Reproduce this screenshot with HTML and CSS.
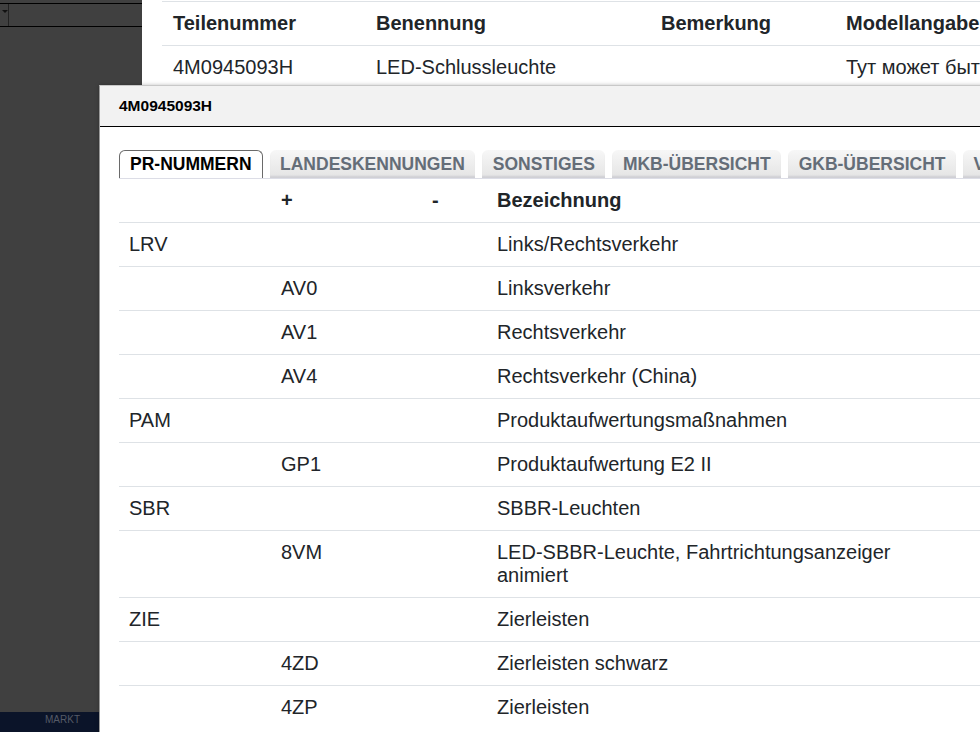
FILE: index.html
```html
<!DOCTYPE html>
<html lang="de">
<head>
    <meta charset="UTF-8">
    <meta name="viewport" content="width=device-width, initial-scale=1.0">
    <title>Teilekatalog</title>
    <link rel="stylesheet" href="styles.css">
</head>
<body>
    <div class="app">
        <aside class="sidebar">
            <div class="sidebar-bar">
                <span class="select-stub"><span class="caret"></span></span>
            </div>
            <div class="sidebar-foot">MARKT</div>
        </aside>

        <main class="content">
            <table class="parts">
                <thead>
                    <tr>
                        <th class="c-nr">Teilenummer</th>
                        <th class="c-name">Benennung</th>
                        <th class="c-note">Bemerkung</th>
                        <th class="c-model">Modellangabe</th>
                    </tr>
                </thead>
                <tbody>
                    <tr>
                        <td>4M0945093H</td>
                        <td>LED-Schlussleuchte</td>
                        <td></td>
                        <td>Тут может быть текст</td>
                    </tr>
                </tbody>
            </table>
        </main>
    </div>

    <div class="modal">
        <div class="modal-head">4M0945093H</div>
        <div class="modal-body">
            <ul class="tabs">
                <li class="tab active">PR-NUMMERN</li>
                <li class="tab">LANDESKENNUNGEN</li>
                <li class="tab">SONSTIGES</li>
                <li class="tab">MKB-ÜBERSICHT</li>
                <li class="tab">GKB-ÜBERSICHT</li>
                <li class="tab">VARIANTEN</li>
            </ul>

            <table class="pr-table">
                <thead>
                    <tr>
                        <th class="c-fam"></th>
                        <th class="c-plus">+</th>
                        <th class="c-minus">-</th>
                        <th class="c-desc">Bezeichnung</th>
                        <th class="c-rest"></th>
                    </tr>
                </thead>
                <tbody>
                    <tr><td>LRV</td><td></td><td></td><td>Links/Rechtsverkehr</td><td></td></tr>
                    <tr><td></td><td>AV0</td><td></td><td>Linksverkehr</td><td></td></tr>
                    <tr><td></td><td>AV1</td><td></td><td>Rechtsverkehr</td><td></td></tr>
                    <tr><td></td><td>AV4</td><td></td><td>Rechtsverkehr (China)</td><td></td></tr>
                    <tr><td>PAM</td><td></td><td></td><td>Produktaufwertungsmaßnahmen</td><td></td></tr>
                    <tr><td></td><td>GP1</td><td></td><td>Produktaufwertung E2 II</td><td></td></tr>
                    <tr><td>SBR</td><td></td><td></td><td>SBBR-Leuchten</td><td></td></tr>
                    <tr><td></td><td>8VM</td><td></td><td>LED-SBBR-Leuchte, Fahrtrichtungsanzeiger animiert</td><td></td></tr>
                    <tr><td>ZIE</td><td></td><td></td><td>Zierleisten</td><td></td></tr>
                    <tr><td></td><td>4ZD</td><td></td><td>Zierleisten schwarz</td><td></td></tr>
                    <tr><td></td><td>4ZP</td><td></td><td>Zierleisten</td><td></td></tr>
                </tbody>
            </table>
        </div>
    </div>
</body>
</html>
```

FILE: styles.css
```css
body {
    font-family: "Liberation Sans", Arial, sans-serif;
    margin: 0;
    height: 100vh;
    overflow: hidden;
    color: #212529;
    background-color: #fff;
}

.app {
    display: flex;
    height: 100vh;
}

/* left navigation */
.sidebar {
    width: 142px;
    flex-shrink: 0;
    background-color: #404040;
    display: flex;
    flex-direction: column;
}

.sidebar-bar {
    margin-top: 3px;
    height: 22px;
    border-top: 1px solid #000;
    border-bottom: 1px solid #000;
    display: flex;
}

.select-stub {
    width: 8px;
    border-right: 1px solid #222;
    position: relative;
}

.caret {
    position: absolute;
    left: 2px;
    top: 6px;
    border-left: 3px solid transparent;
    border-right: 3px solid transparent;
    border-top: 3px solid #111;
}

.sidebar-foot {
    margin-top: auto;
    height: 20px;
    background-color: #0b1429;
    color: #555a66;
    font-size: 10px;
    line-height: 16px;
    padding-left: 45px;
}

/* background parts table */
.content {
    flex-grow: 1;
    padding: 1px 0 0 20px;
    overflow: hidden;
}

.parts {
    border-collapse: collapse;
    width: 900px;
    font-size: 20px;
    white-space: nowrap;
}

.parts th,
.parts td {
    text-align: left;
    padding: 0 11px;
    height: 43px;
    border-top: 1px solid #dee2e6;
}

.parts th {
    border-bottom: 1px solid #dee2e6;
}

.c-nr { width: 181px; }
.c-name { width: 263px; }
.c-note { width: 163px; }

/* modal */
.modal {
    position: absolute;
    left: 99px;
    top: 85px;
    width: 900px;
    height: 680px;
    background-color: #fff;
    border-top: 1px solid #c8c8c8;
    border-left: 1px solid #9a9a9a;
    box-shadow: 0 0 4px rgba(0, 0, 0, 0.25);
}

.modal-head {
    height: 40px;
    line-height: 40px;
    padding-left: 19px;
    background-color: #f2f2f2;
    border-bottom: 1px solid #000;
    font-size: 15.5px;
    font-weight: bold;
    color: #000;
}

.modal-body {
    padding: 23px 0 0 19px;
}

.tabs {
    list-style-type: none;
    margin: 0;
    padding: 0;
    display: flex;
    gap: 7px;
    border-bottom: 1px solid #dcdde6;
    white-space: nowrap;
}

.tab {
    height: 28px;
    line-height: 28px;
    padding: 0 10.5px;
    font-size: 17.5px;
    font-weight: bold;
    color: #646d78;
    border-radius: 6px 6px 0 0;
    background: linear-gradient(#f7f7f7, #e4e4e4);
    box-shadow: inset 0 -3px 2px -1px #cfcfd4;
    box-sizing: border-box;
}

.tab.active {
    padding: 0 10px;
    color: #000;
    background: #fff;
    border: 1px solid #6a6a6a;
    border-bottom: none;
    box-shadow: none;
    line-height: 27px;
}

.pr-table {
    border-collapse: collapse;
    font-size: 20px;
    line-height: 23px;
    table-layout: fixed;
    width: 1000px;
}

.pr-table th,
.pr-table td {
    text-align: left;
    vertical-align: top;
    padding: 10px;
}

.pr-table td {
    border-top: 1px solid #dee2e6;
}

.c-fam { width: 132px; }
.c-plus { width: 131px; }
.c-minus { width: 45px; }
.c-desc { width: 430px; }
```
